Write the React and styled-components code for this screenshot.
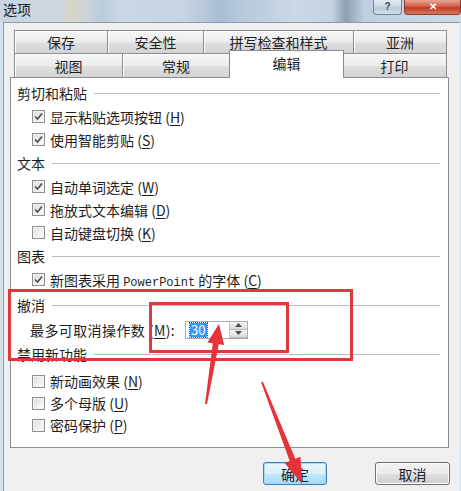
import React from "react";
import styled, { createGlobalStyle } from "styled-components";

const GlobalStyle = createGlobalStyle`
  html, body {
    margin: 0;
    padding: 0;
    width: 461px;
    height: 491px;
    overflow: hidden;
  }
  body {
    font-family: "Noto Sans CJK SC", "Liberation Sans", sans-serif;
    color: #1e1e1e;
  }
  * { box-sizing: border-box; }
`;

const Window = styled.div`
  position: relative;
  width: 461px;
  height: 491px;
  display: flex;
  flex-direction: column;
  background: #d6e1ec;
`;

const TitleBar = styled.div`
  height: 22px;
  display: flex;
  align-items: flex-start;
  overflow: hidden;
  background: linear-gradient(
    90deg,
    #c8d5e2 0%,
    #cfd7dc 13%,
    #d9d6c4 15%,
    #c9d4de 19%,
    #bccbd9 22%,
    #cbd7e4 26%,
    #c6d4e3 40%,
    #a9bdd3 48%,
    #b7c8db 52%,
    #cbd8e6 64%,
    #c3d2e2 72%,
    #8e9fb2 75%,
    #bfcfdf 79%,
    #cdd9e6 100%
  );
`;

const Title = styled.span`
  margin: 1px 0 0 3px;
  font-size: 14px;
  line-height: 16px;
  color: #202020;
`;

const Spacer = styled.div`
  flex: 1;
`;

const CaptionButton = styled.div`
  height: 15px;
  width: ${(p) => p.$w}px;
  margin-left: 2px;
  display: flex;
  align-items: center;
  justify-content: center;
  font-family: "Liberation Sans", sans-serif;
  font-size: 10px;
  line-height: 10px;
  border: 1px solid ${(p) => (p.$close ? "#8a3a30" : "#71839a")};
  border-top: none;
  border-radius: 0 0 4px 4px;
  color: ${(p) => (p.$close ? "#fff" : "#3a4a5c")};
  font-weight: bold;
  background: ${(p) =>
    p.$close
      ? "linear-gradient(180deg, #e7a593 0%, #d2604a 45%, #c23b24 55%, #d8765c 100%)"
      : "linear-gradient(180deg, #e4ecf5 0%, #cbd7e4 50%, #b9c8d8 55%, #d2dfec 100%)"};
`;

const Body = styled.div`
  flex: 1;
  margin: 0 1px 0 3px;
  padding: 7px 10px 0 6px;
  background: #f0f0f0;
  border-top: 1px solid #8c9aaa;
  border-left: 1px solid #8c9aaa;
  display: flex;
  flex-direction: column;
`;

const TabRow = styled.div`
  display: grid;
  grid-template-columns: ${(p) => p.$cols};
  height: ${(p) => p.$h}px;
  margin-left: 4px;
  width: 433px;
  border-left: 1px solid #898c95;
`;

const Tab = styled.div`
  display: flex;
  align-items: center;
  justify-content: center;
  font-size: 14px;
  line-height: 16px;
  border-top: 1px solid #898c95;
  border-right: 1px solid #898c95;
  background: linear-gradient(180deg, #f6f6f6 0%, #ececec 50%, #dedede 55%, #d4d4d4 100%);
  box-shadow: inset 1px 1px 0 #ffffff;
`;

const ActiveTab = styled(Tab)`
  position: relative;
  z-index: 2;
  margin: -3px -1px -1px -1px;
  border-left: 1px solid #898c95;
  background: #ffffff;
  box-shadow: none;
  align-items: flex-start;
  padding-top: 4px;
`;

const Panel = styled.div`
  position: relative;
  z-index: 1;
  width: 439px;
  height: 371px;
  background: #ffffff;
  border: 1px solid #898c95;
  padding: 3px 0 0 6px;
  display: flex;
  flex-direction: column;
`;

const Header = styled.div`
  display: flex;
  align-items: center;
  height: 24px;
  margin-top: ${(p) => p.$mt || 0}px;
  font-size: 14px;
  gap: 7px;
`;

const Rule = styled.div`
  flex: 1;
  height: 1px;
  margin-right: 8px;
  background: #bdbdbd;
`;

const Items = styled.div`
  display: flex;
  flex-direction: column;
  padding-top: ${(p) => p.$pt || 0}px;
`;

const Item = styled.div`
  display: flex;
  align-items: center;
  height: ${(p) => p.$h || 23}px;
  padding-left: 15px;
  gap: 5px;
  font-size: 14px;
  white-space: nowrap;
`;

const Box = styled.span`
  width: 13px;
  height: 13px;
  display: flex;
  align-items: center;
  justify-content: center;
  border: 1px solid #8e8f8f;
  background: linear-gradient(135deg, #dcdcdc 0%, #f4f4f4 70%, #ffffff 100%);
  box-shadow: inset 0 0 0 1px #f4f4f4;
`;

const Key = styled.u`
  text-underline-offset: 2px;
`;

const Latin = styled.span`
  font-family: "Liberation Mono", monospace;
  font-size: 12px;
`;

const UndoRow = styled.div`
  display: flex;
  align-items: center;
  height: 25px;
  padding-left: 13px;
  font-size: 14px;
  white-space: nowrap;
`;

const Label = styled.span`
  letter-spacing: 0.4px;
`;

const SpinField = styled.div`
  margin-left: 10px;
  width: 63px;
  height: 18px;
  display: flex;
  align-items: center;
  border: 1px solid #abadb3;
  background: #fff;
  padding-left: 4px;
`;

const Selected = styled.span`
  background: #3399ff;
  color: #fff;
  font-size: 13px;
  line-height: 14px;
  padding: 0 1px;
  outline: 1px dotted #1b5fa8;
`;

const Spinner = styled.div`
  margin-left: auto;
  width: 18px;
  height: 16px;
  display: flex;
  flex-direction: column;
  border-left: 1px solid #c8c8c8;
`;

const SpinBtn = styled.div`
  flex: 1;
  display: flex;
  align-items: center;
  justify-content: center;
  background: linear-gradient(180deg, #f4f4f4, #dcdcdc);
  border-bottom: 1px solid #b8b8b8;
`;

const ButtonRow = styled.div`
  display: flex;
  justify-content: flex-end;
  gap: 48px;
  margin-top: 14px;
`;

const Button = styled.div`
  height: 23px;
  width: ${(p) => p.$w}px;
  display: flex;
  align-items: center;
  justify-content: center;
  font-size: 14px;
  border-radius: 3px;
  border: 1px solid ${(p) => (p.$default ? "#3c7fb1" : "#707070")};
  background: ${(p) =>
    p.$default
      ? "linear-gradient(180deg, #eaf6fd 0%, #d9f0fc 50%, #bee6fd 55%, #a7d9f5 100%)"
      : "linear-gradient(180deg, #f2f2f2 0%, #ebebeb 50%, #dddddd 55%, #cfcfcf 100%)"};
  box-shadow: inset 0 0 0 1px ${(p) => (p.$default ? "#9fdcfb" : "#fcfcfc")};
`;

const Mark = styled.div`
  position: absolute;
  left: ${(p) => p.$x}px;
  top: ${(p) => p.$y}px;
  width: ${(p) => p.$w}px;
  height: ${(p) => p.$h}px;
  border: 3px solid #dc3a3f;
  pointer-events: none;
  z-index: 5;
`;

const Overlay = styled.svg`
  position: absolute;
  left: 0;
  top: 0;
  z-index: 6;
  pointer-events: none;
`;

const CheckBox = ({ checked }) => (
  <Box>
    {checked && (
      <svg width="9" height="9" viewBox="0 0 9 9">
        <path d="M1 4.5 L3.5 7 L8 1.5" fill="none" stroke="#4a4f55" strokeWidth="1.7" />
      </svg>
    )}
  </Box>
);

const Check = ({ checked, label, k, h, children }) => (
  <Item $h={h}>
    <CheckBox checked={checked} />
    <span>
      {label}
      {children}
      {" ("}
      <Key>{k}</Key>
      {")"}
    </span>
  </Item>
);

const Section = ({ title, mt }) => (
  <Header $mt={mt}>
    <span>{title}</span>
    <Rule />
  </Header>
);

// polygon for a tapered arrow from tail to tip
const arrow = (tail, tip, tailW, shaftW, headW, headLen) => {
  const dx = tip[0] - tail[0];
  const dy = tip[1] - tail[1];
  const len = Math.hypot(dx, dy);
  const ux = dx / len;
  const uy = dy / len;
  const nx = -uy;
  const ny = ux;
  const neck = [tip[0] - ux * headLen, tip[1] - uy * headLen];
  const p = (b, w) => [b[0] + nx * w, b[1] + ny * w];
  const pts = [
    p(tail, tailW / 2),
    p(neck, shaftW / 2),
    p(neck, headW / 2),
    tip,
    p(neck, -headW / 2),
    p(neck, -shaftW / 2),
    p(tail, -tailW / 2),
  ];
  return pts.map((q) => q.join(",")).join(" ");
};

const App = () => {
  return (
    <Window>
      <GlobalStyle />
      <TitleBar>
        <Title>选项</Title>
        <Spacer />
        <CaptionButton $w={29}>?</CaptionButton>
        <CaptionButton $w={57} $close>
          ✕
        </CaptionButton>
      </TitleBar>
      <Body>
        <TabRow $cols="93px 96px 150px 1fr" $h={23}>
          <Tab>保存</Tab>
          <Tab>安全性</Tab>
          <Tab>拼写检查和样式</Tab>
          <Tab>亚洲</Tab>
        </TabRow>
        <TabRow $cols="108px 107px 113px 1fr" $h={24}>
          <Tab>视图</Tab>
          <Tab>常规</Tab>
          <ActiveTab>编辑</ActiveTab>
          <Tab>打印</Tab>
        </TabRow>
        <Panel>
          <Section title="剪切和粘贴" />
          <Items>
            <Check checked label="显示粘贴选项按钮" k="H" />
            <Check checked label="使用智能剪贴" k="S" />
          </Items>
          <Section title="文本" />
          <Items>
            <Check checked label="自动单词选定" k="W" />
            <Check checked label="拖放式文本编辑" k="D" />
            <Check label="自动键盘切换" k="K" />
          </Items>
          <Section title="图表" />
          <Items>
            <Check checked label="新图表采用 " k="C">
              <Latin>PowerPoint</Latin> 的字体
            </Check>
          </Items>
          <Section title="撤消" mt={2} />
          <UndoRow>
            <Label>
              最多可取消操作数 (<Key>M</Key>):
            </Label>
            <SpinField>
              <Selected>30</Selected>
              <Spinner>
                <SpinBtn>
                  <svg width="7" height="4" viewBox="0 0 7 4">
                    <path d="M0 4 L3.5 0 L7 4 Z" fill="#4d4d4d" />
                  </svg>
                </SpinBtn>
                <SpinBtn>
                  <svg width="7" height="4" viewBox="0 0 7 4">
                    <path d="M0 0 L3.5 4 L7 0 Z" fill="#4d4d4d" />
                  </svg>
                </SpinBtn>
              </Spinner>
            </SpinField>
          </UndoRow>
          <Section title="禁用新功能" />
          <Items $pt={4}>
            <Check label="新动画效果" k="N" h={22} />
            <Check label="多个母版" k="U" h={22} />
            <Check label="密码保护" k="P" h={22} />
          </Items>
        </Panel>
        <ButtonRow>
          <Button $w={64} $default>
            确定
          </Button>
          <Button $w={75}>取消</Button>
        </ButtonRow>
      </Body>

      <Mark $x={8} $y={289} $w={345} $h={72} />
      <Mark $x={149} $y={302} $w={140} $h={51} />
      <Overlay width="461" height="491" viewBox="0 0 461 491">
        <polygon points={arrow([206, 404], [219, 324], 2, 6, 17, 20)} fill="#e8323a" />
        <polygon points={arrow([262, 382], [302, 484], 2, 6, 17, 26)} fill="#e8323a" />
      </Overlay>
    </Window>
  );
};

export default App;
